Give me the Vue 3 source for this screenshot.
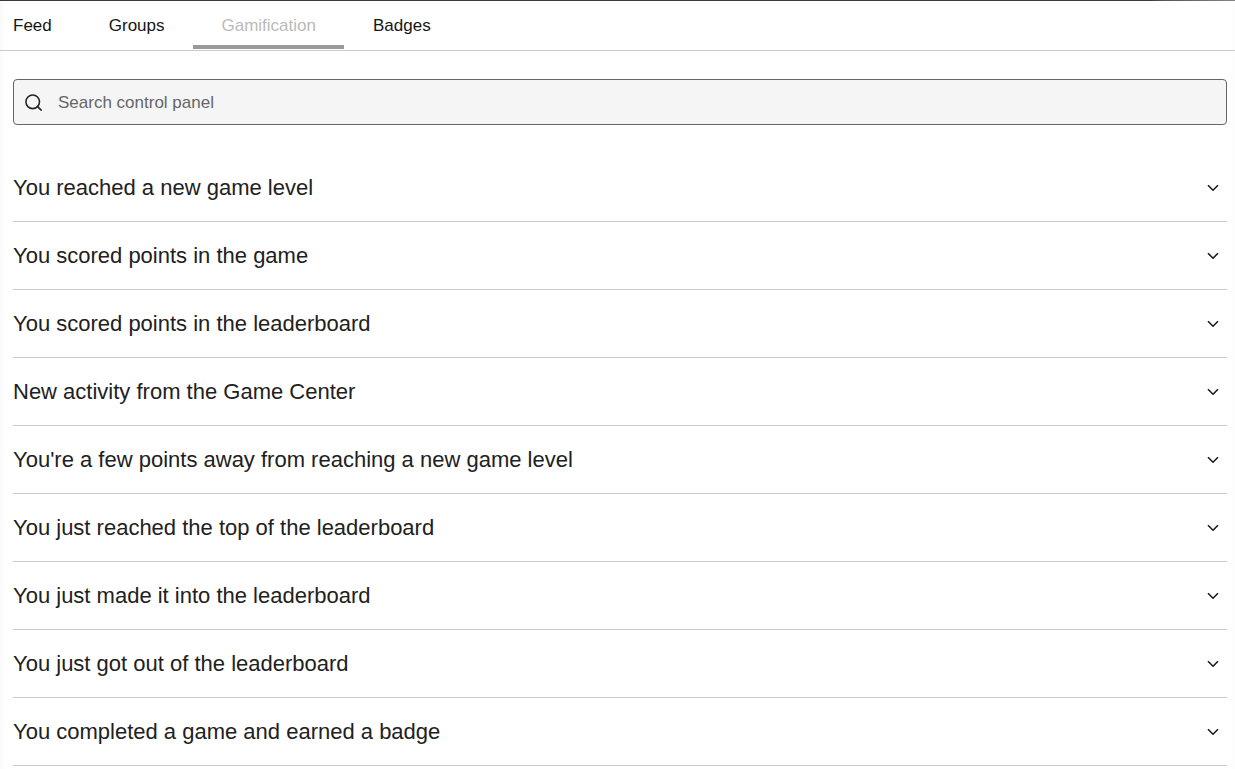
<script setup>
import { ref, computed } from 'vue'

const tabs = ['Feed', 'Groups', 'Gamification', 'Badges']
const active = ref('Gamification')
const query = ref('')
const open = ref(null)

const items = [
  'You reached a new game level',
  'You scored points in the game',
  'You scored points in the leaderboard',
  'New activity from the Game Center',
  "You're a few points away from reaching a new game level",
  'You just reached the top of the leaderboard',
  'You just made it into the leaderboard',
  'You just got out of the leaderboard',
  'You completed a game and earned a badge'
]

const shown = computed(() =>
  items.filter((t) => t.toLowerCase().includes(query.value.toLowerCase()))
)

function toggle(item) {
  open.value = open.value === item ? null : item
}
</script>

<template>
  <div class="page">
    <nav class="tabs" role="tablist">
      <button
        v-for="tab in tabs"
        :key="tab"
        type="button"
        role="tab"
        class="tab"
        :class="{ active: tab === active }"
        :aria-selected="tab === active"
        @click="active = tab"
      >
        {{ tab }}
      </button>
    </nav>

    <main class="content">
      <label class="search">
        <svg class="search-icon" viewBox="0 0 18 18" aria-hidden="true">
          <circle cx="7.7" cy="8.8" r="6.8" />
          <path d="M12.6 13.6l4 4" />
        </svg>
        <input
          v-model="query"
          type="text"
          placeholder="Search control panel"
          aria-label="Search control panel"
        />
      </label>

      <ul class="list">
        <li v-for="item in shown" :key="item">
          <button
            type="button"
            class="row"
            :aria-expanded="open === item"
            @click="toggle(item)"
          >
            <span>{{ item }}</span>
            <svg class="chevron" viewBox="0 0 12 8" aria-hidden="true">
              <path d="M1 1.2l5 5 5-5" />
            </svg>
          </button>
        </li>
      </ul>
    </main>
  </div>
</template>

<style>
body {
  background: #fff;
}
</style>

<style scoped>
.page {
  box-sizing: border-box;
  min-height: 100vh;
  font-family: 'Liberation Sans', Arial, sans-serif;
  color: #212121;
  background: linear-gradient(to right, #fafafa, #fff 6px, #fff calc(100% - 6px), #fdfdfd);
}

.tabs {
  display: flex;
  height: 48px;
  padding-bottom: 1px;
  border-top: 1px solid;
  border-image: linear-gradient(to right, #3a3a3a 93%, #555 94%, #858585) 1;
  box-shadow: 0 1px #ccc;
}

.tab {
  padding: 6px 28px 0 29px;
  border: 0;
  border-bottom: 4px solid transparent;
  background: none;
  font: 17px/20px 'Liberation Sans', Arial, sans-serif;
  color: #161616;
  cursor: pointer;
}

.tab:first-child {
  padding-left: 13px;
}

.tab.active {
  border-bottom-color: #999;
  color: #bababa;
}

.content {
  padding: 29px 8px 0 13px;
}

.search {
  display: flex;
  align-items: center;
  box-sizing: border-box;
  height: 46px;
  padding: 0 11px;
  gap: 15px;
  border: 1px solid #666;
  border-radius: 4px;
  background: #f5f5f5;
}

.search-icon {
  flex: none;
  width: 18px;
  height: 18px;
  fill: none;
  stroke: #262626;
  stroke-width: 1.6;
}

.search input {
  flex: 1;
  min-width: 0;
  padding: 2px 0 0;
  border: 0;
  outline: 0;
  background: none;
  font: 17px/20px 'Liberation Sans', Arial, sans-serif;
  color: #212121;
}

.search input::placeholder {
  color: #666;
  opacity: 1;
}

.list {
  margin: 29px 0 0;
  padding: 0;
  list-style: none;
}

.row {
  display: flex;
  align-items: center;
  justify-content: space-between;
  box-sizing: border-box;
  width: 100%;
  padding: 20px 8px 20px 0;
  border: 0;
  border-bottom: 1px solid #ccc;
  background: none;
  font: 22px/27px 'Liberation Sans', Arial, sans-serif;
  color: #212121;
  text-align: left;
  cursor: pointer;
}

.chevron {
  flex: none;
  width: 12px;
  height: 8px;
  fill: none;
  stroke: #1a1a1a;
  stroke-width: 1.6;
}
</style>
